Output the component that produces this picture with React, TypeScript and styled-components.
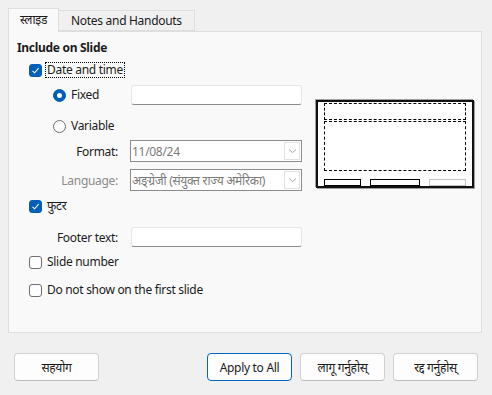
import { createGlobalStyle, styled } from "styled-components";

const GlobalStyle = createGlobalStyle`
  html, body {
    margin: 0;
    padding: 0;
    background: #f0f0f0;
  }
  body {
    font-family: "Segoe UI", "Noto Sans", "Noto Sans Devanagari", sans-serif;
    font-size: 12px;
    letter-spacing: -0.3px;
    color: #1b1b1b;
  }
`;

const Dialog = styled.div`
  width: 492px;
  height: 395px;
  box-sizing: border-box;
  padding-top: 8px;
`;

const TabBar = styled.div`
  display: flex;
  align-items: flex-end;
  padding-left: 8px;
  height: 23px;
  position: relative;
  z-index: 1;
`;

const Tab = styled.div<{ $active?: boolean }>`
  box-sizing: border-box;
  height: ${(p) => (p.$active ? "24px" : "21px")};
  margin-bottom: ${(p) => (p.$active ? "-1px" : "0")};
  padding: 0 ${(p) => (p.$active ? "11px" : "12px")};
  display: flex;
  align-items: center;
  background: ${(p) => (p.$active ? "#f9f9f9" : "#f0f0f0")};
  border: 1px solid #dedede;
  border-bottom: ${(p) => (p.$active ? "none" : "1px solid #dedede")};
  border-left: ${(p) => (p.$active ? "1px solid #dedede" : "none")};
  padding-bottom: ${(p) => (p.$active ? "2px" : "0")};
  color: #1b1b1b;
`;

const Panel = styled.div`
  box-sizing: border-box;
  margin: 0 10px 0 8px;
  height: 302px;
  border: 1px solid #dedede;
  background: #f9f9f9;
  padding: 8px 7px 0 8px;
  display: grid;
  grid-template-columns: 285px 158px;
  column-gap: 14px;
  align-items: start;
`;

const Column = styled.div`
  display: flex;
  flex-direction: column;
`;

const Title = styled.div`
  font-weight: 700;
  height: 16px;
  line-height: 16px;
`;

const Row = styled.div<{ $mt: number; $indent?: number; $h?: number }>`
  display: flex;
  align-items: center;
  height: ${(p) => p.$h ?? 20}px;
  margin-top: ${(p) => p.$mt}px;
  padding-left: ${(p) => p.$indent ?? 0}px;
`;

const Box = styled.span<{ $checked?: boolean }>`
  box-sizing: border-box;
  width: 13px;
  height: 13px;
  border-radius: 3px;
  flex: none;
  display: flex;
  align-items: center;
  justify-content: center;
  background: ${(p) => (p.$checked ? "#005fb8" : "#fdfdfd")};
  border: 1px solid ${(p) => (p.$checked ? "#005fb8" : "#6f6f6f")};
`;

const Radio = styled.span<{ $checked?: boolean }>`
  box-sizing: border-box;
  width: 13px;
  height: 13px;
  border-radius: 50%;
  flex: none;
  display: flex;
  align-items: center;
  justify-content: center;
  background: ${(p) => (p.$checked ? "#005fb8" : "#fdfdfd")};
  border: 1px solid ${(p) => (p.$checked ? "#005fb8" : "#6f6f6f")};
  &::after {
    content: "";
    display: ${(p) => (p.$checked ? "block" : "none")};
    width: 5px;
    height: 5px;
    border-radius: 50%;
    background: #fff;
  }
`;

const Label = styled.span<{ $focus?: boolean }>`
  margin-left: 4px;
  padding: 0 1px;
  line-height: 14px;
  outline: ${(p) => (p.$focus ? "1px dotted #000" : "none")};
`;

const FieldLabel = styled.span<{ $muted?: boolean }>`
  width: 101px;
  text-align: right;
  color: ${(p) => (p.$muted ? "#8a8a8a" : "#1b1b1b")};
  flex: none;
`;

const TextBox = styled.div<{ $ml?: number }>`
  box-sizing: border-box;
  width: 171px;
  height: 20px;
  margin-left: ${(p) => (p.$ml === undefined ? "auto" : `${p.$ml}px`)};
  background: #fff;
  border: 1px solid #e6e6e6;
  border-bottom-color: #8a8a8a;
  border-radius: 3px;
`;

const Combo = styled.div`
  box-sizing: border-box;
  width: 172px;
  height: 22px;
  margin-left: 12px;
  background: #fff;
  border: 1px solid #8c8c8c;
  display: flex;
  align-items: center;
  padding: 0 1px 0 1px;
  color: #7a7a7a;
`;

const ComboText = styled.span`
  flex: 1;
  white-space: nowrap;
  overflow: hidden;
`;

const ComboButton = styled.span`
  box-sizing: border-box;
  width: 16px;
  height: 18px;
  border: 1px solid #e2e2e2;
  display: flex;
  align-items: center;
  justify-content: center;
  flex: none;
`;

const Preview = styled.div`
  box-sizing: border-box;
  margin-top: 60px;
  width: 158px;
  height: 88px;
  border: 2px solid #111;
  box-shadow: -1px -1px 0 #a0a0a0, 1px 1px 0 #a0a0a0;
  background: #fff;
  padding: 1px 6px 0 6px;
  display: flex;
  flex-direction: column;
`;

const DashedArea = styled.div<{ $h: number; $mt: number }>`
  box-sizing: border-box;
  height: ${(p) => p.$h}px;
  margin-top: ${(p) => p.$mt}px;
  border: 1.5px dashed #000;
`;

const FooterBars = styled.div`
  display: flex;
  justify-content: space-between;
  margin-top: 8px;
`;

const Bar = styled.div<{ $w: number; $off?: boolean }>`
  box-sizing: border-box;
  width: ${(p) => p.$w}px;
  height: 7px;
  border: 1.5px solid ${(p) => (p.$off ? "#c4c4c4" : "#000")};
`;

const ButtonRow = styled.div`
  display: flex;
  gap: 8px;
  padding: 0 14px;
  margin-top: 20px;
`;

const Button = styled.button<{ $default?: boolean }>`
  box-sizing: border-box;
  width: 85px;
  height: 28px;
  font: inherit;
  letter-spacing: inherit;
  color: #1b1b1b;
  background: #fdfdfd;
  border: 1px solid ${(p) => (p.$default ? "#0067c0" : "#d1d1d1")};
  border-bottom-color: ${(p) => (p.$default ? "#0067c0" : "#bdbdbd")};
  border-radius: 4px;
  padding: 0;
`;

const Spacer = styled.div`
  flex: 1;
`;

function Check() {
  return (
    <svg width="9" height="9" viewBox="0 0 9 9">
      <path d="M1.5 4.8 L3.6 6.8 L7.6 2.2" fill="none" stroke="#fff" strokeWidth="1.1" />
    </svg>
  );
}

function Chevron() {
  return (
    <svg width="9" height="6" viewBox="0 0 9 6">
      <path d="M1 1.5 L4.5 4.5 L8 1.5" fill="none" stroke="#a8a8a8" strokeWidth="1" />
    </svg>
  );
}

export default function App() {
  return (
    <>
      <GlobalStyle />
      <Dialog>
        <TabBar>
          <Tab $active>स्लाइड</Tab>
          <Tab>Notes and Handouts</Tab>
        </TabBar>
        <Panel>
          <Column>
            <Title>Include on Slide</Title>
            <Row $mt={4} $indent={12}>
              <Box $checked><Check /></Box>
              <Label $focus>Date and time</Label>
            </Row>
            <Row $mt={5} $indent={36}>
              <Radio $checked />
              <Label>Fixed</Label>
              <TextBox />
            </Row>
            <Row $mt={11} $indent={36}>
              <Radio />
              <Label>Variable</Label>
            </Row>
            <Row $mt={4} $h={22}>
              <FieldLabel>Format:</FieldLabel>
              <Combo>
                <ComboText>11/08/24</ComboText>
                <ComboButton><Chevron /></ComboButton>
              </Combo>
            </Row>
            <Row $mt={7} $h={22}>
              <FieldLabel $muted>Language:</FieldLabel>
              <Combo>
                <ComboText>अङ्ग्रेजी (संयुक्त राज्य अमेरिका)</ComboText>
                <ComboButton><Chevron /></ComboButton>
              </Combo>
            </Row>
            <Row $mt={5} $indent={12}>
              <Box $checked><Check /></Box>
              <Label>फुटर</Label>
            </Row>
            <Row $mt={11}>
              <FieldLabel>Footer text:</FieldLabel>
              <TextBox $ml={13} />
            </Row>
            <Row $mt={5} $indent={12}>
              <Box />
              <Label>Slide number</Label>
            </Row>
            <Row $mt={8} $indent={12}>
              <Box />
              <Label>Do not show on the first slide</Label>
            </Row>
          </Column>
          <Preview>
            <DashedArea $h={17} $mt={0} />
            <DashedArea $h={52} $mt={1} />
            <FooterBars>
              <Bar $w={37} />
              <Bar $w={50} />
              <Bar $w={37} $off />
            </FooterBars>
          </Preview>
        </Panel>
        <ButtonRow>
          <Button>सहयोग</Button>
          <Spacer />
          <Button $default>Apply to All</Button>
          <Button>लागू गर्नुहोस्</Button>
          <Button>रद्द गर्नुहोस्</Button>
        </ButtonRow>
      </Dialog>
    </>
  );
}
